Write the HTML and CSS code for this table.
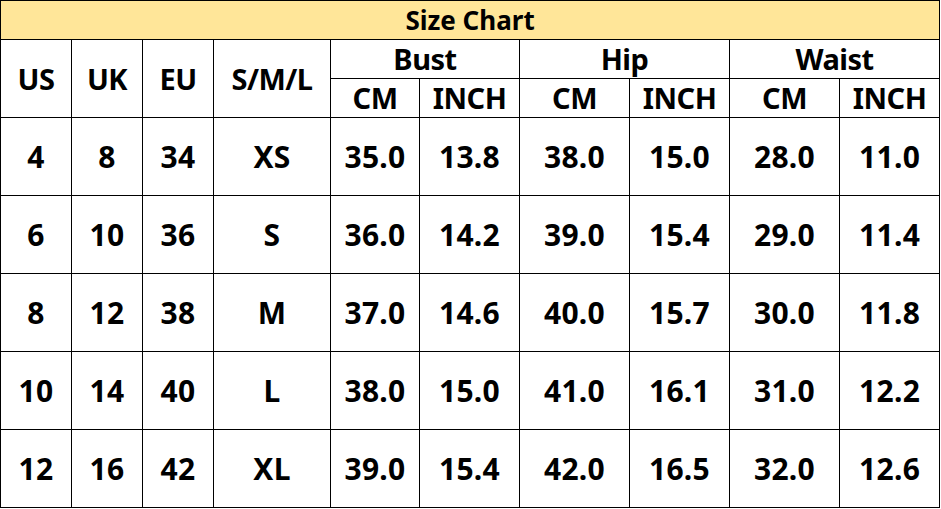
FILE: index.html
```html
<!DOCTYPE html>
<html>
<head>
<meta charset="utf-8">
<link rel="stylesheet" href="styles.css">
</head>
<body>
<table class="chart">
  <colgroup>
    <col class="c71"><col class="c71"><col class="c71"><col class="c117">
    <col class="c89"><col class="c100"><col class="c110"><col class="c100"><col class="c110"><col class="c100">
  </colgroup>
  <thead>
    <tr class="title-row"><th colspan="10" class="title">Size Chart</th></tr>
    <tr class="h-row">
      <th rowspan="2">US</th><th rowspan="2">UK</th><th rowspan="2">EU</th><th rowspan="2">S/M/L</th>
      <th colspan="2">Bust</th><th colspan="2">Hip</th><th colspan="2">Waist</th>
    </tr>
    <tr class="h-row">
      <th>CM</th><th>INCH</th><th>CM</th><th>INCH</th><th>CM</th><th>INCH</th>
    </tr>
  </thead>
  <tbody>
    <tr><td>4</td><td>8</td><td>34</td><td>XS</td><td>35.0</td><td>13.8</td><td>38.0</td><td>15.0</td><td>28.0</td><td>11.0</td></tr>
    <tr><td>6</td><td>10</td><td>36</td><td>S</td><td>36.0</td><td>14.2</td><td>39.0</td><td>15.4</td><td>29.0</td><td>11.4</td></tr>
    <tr><td>8</td><td>12</td><td>38</td><td>M</td><td>37.0</td><td>14.6</td><td>40.0</td><td>15.7</td><td>30.0</td><td>11.8</td></tr>
    <tr><td>10</td><td>14</td><td>40</td><td>L</td><td>38.0</td><td>15.0</td><td>41.0</td><td>16.1</td><td>31.0</td><td>12.2</td></tr>
    <tr><td>12</td><td>16</td><td>42</td><td>XL</td><td>39.0</td><td>15.4</td><td>42.0</td><td>16.5</td><td>32.0</td><td>12.6</td></tr>
  </tbody>
</table>
</body>
</html>
```
FILE: styles.css
```css
html, body {
  margin: 0;
  padding: 0;
  background: #ffffff;
}
.chart {
  border-collapse: collapse;
  table-layout: fixed;
  width: 940px;
  font-family: "Noto Sans", "Open Sans", sans-serif;
  font-weight: 700;
  color: #000;
}
.c71 { width: 71px; }
.c117 { width: 117px; }
.c89 { width: 89px; }
.c100 { width: 100px; }
.c110 { width: 110px; }
.chart th, .chart td {
  border: 1px solid #000;
  padding: 0;
  text-align: center;
  vertical-align: middle;
  font-size: 29px;
  line-height: 30px;
  font-weight: 700;
  white-space: nowrap;
  overflow: hidden;
}
.h-row th {
  height: 38px;
  letter-spacing: -0.5px;
}
.title-row th {
  height: 38px;
  background: #ffe699;
  font-size: 26px;
  letter-spacing: 0;
}
.chart tbody td {
  height: 77px;
  font-size: 30px;
  letter-spacing: 0.3px;
}
```
